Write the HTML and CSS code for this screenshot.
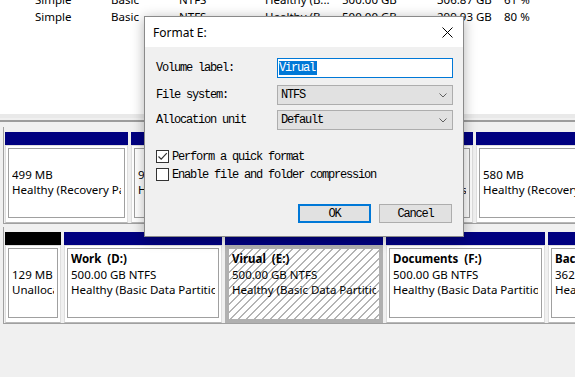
FILE: index.html
```html
<!DOCTYPE html>
<html lang="en">
<head>
    <meta charset="UTF-8" />
    <title>Disk Management - Format E:</title>
    <link rel="stylesheet" href="styles.css">
</head>
<body>
    <div class="volumes">
        <div class="vol-row">
            <span>Simple</span><span>Basic</span><span>NTFS</span><span>Healthy (B...</span><span>500.00 GB</span><span>306.87 GB</span><span>61 %</span>
        </div>
        <div class="vol-row">
            <span>Simple</span><span>Basic</span><span>NTFS</span><span>Healthy (B...</span><span>500.00 GB</span><span>299.93 GB</span><span>80 %</span>
        </div>
    </div>
    <div class="splitter"></div>

    <div class="disks">
        <div class="disk">
            <div class="part" style="width:123px">
                <div class="bar"></div>
                <div class="cell"><div class="box">
                    <div class="ln">&nbsp;</div>
                    <div class="ln">499 MB</div>
                    <div class="ln">Healthy (Recovery Partition)</div>
                </div></div>
            </div>
            <div class="part" style="width:99px">
                <div class="bar"></div>
                <div class="cell"><div class="box">
                    <div class="ln">&nbsp;</div>
                    <div class="ln">99 MB</div>
                    <div class="ln">Healthy (EFI System Partition)</div>
                </div></div>
            </div>
            <div class="part" style="width:240px">
                <div class="bar"></div>
                <div class="cell"><div class="box">
                    <div class="ln name">(C:)</div>
                    <div class="ln">99.25 GB NTFS</div>
                    <div class="ln">Healthy (Boot, Page File, Crash Dump, Basic Data Partition)</div>
                </div></div>
            </div>
            <div class="part grow">
                <div class="bar"></div>
                <div class="cell"><div class="box">
                    <div class="ln">&nbsp;</div>
                    <div class="ln">580 MB</div>
                    <div class="ln">Healthy (Recovery Partition)</div>
                </div></div>
            </div>
        </div>

        <div class="disk">
            <div class="part" style="width:56px">
                <div class="bar unalloc"></div>
                <div class="cell"><div class="box">
                    <div class="ln">&nbsp;</div>
                    <div class="ln">129 MB</div>
                    <div class="ln">Unallocated</div>
                </div></div>
            </div>
            <div class="part" style="width:158px">
                <div class="bar"></div>
                <div class="cell"><div class="box">
                    <div class="ln name">Work&nbsp; (D:)</div>
                    <div class="ln">500.00 GB NTFS</div>
                    <div class="ln">Healthy (Basic Data Partition)</div>
                </div></div>
            </div>
            <div class="part" style="width:158px">
                <div class="bar"></div>
                <div class="cell selected">
                    <div class="ln name">Virual&nbsp; (E:)</div>
                    <div class="ln">500.00 GB NTFS</div>
                    <div class="ln">Healthy (Basic Data Partition)</div>
                </div>
            </div>
            <div class="part" style="width:159px">
                <div class="bar"></div>
                <div class="cell"><div class="box">
                    <div class="ln name">Documents&nbsp; (F:)</div>
                    <div class="ln">500.00 GB NTFS</div>
                    <div class="ln">Healthy (Basic Data Partition)</div>
                </div></div>
            </div>
            <div class="part grow">
                <div class="bar"></div>
                <div class="cell"><div class="box">
                    <div class="ln name">Backup&nbsp; (G:)</div>
                    <div class="ln">362.51 GB NTFS</div>
                    <div class="ln">Healthy (Basic Data Partition)</div>
                </div></div>
            </div>
        </div>
    </div>

    <div class="dialog">
        <div class="titlebar">
            <span class="title">Format E:</span>
            <svg class="close" width="11" height="11" viewBox="0 0 11 11">
                <path d="M0.5 0.5 L10.5 10.5 M10.5 0.5 L0.5 10.5" stroke="#000" stroke-width="1" fill="none"/>
            </svg>
        </div>
        <div class="dlg-body">
            <div class="field">
                <label>Volume label:</label>
                <div class="input"><span class="sel">Virual</span></div>
            </div>
            <div class="field">
                <label>File system:</label>
                <div class="combo"><span>NTFS</span>
                    <svg width="8" height="5" viewBox="0 0 8 5"><path d="M0.5 0.5 L4 4 L7.5 0.5" stroke="#606060" fill="none"/></svg>
                </div>
            </div>
            <div class="field gap-s">
                <label>Allocation unit</label>
                <div class="combo"><span>Default</span>
                    <svg width="8" height="5" viewBox="0 0 8 5"><path d="M0.5 0.5 L4 4 L7.5 0.5" stroke="#606060" fill="none"/></svg>
                </div>
            </div>
            <div class="check first">
                <span class="cb">
                    <svg width="11" height="11" viewBox="0 0 11 11"><path d="M1.5 5.5 L4.2 8.2 L9.8 2.2" stroke="#333" stroke-width="1.2" fill="none"/></svg>
                </span>
                <span>Perform a quick format</span>
            </div>
            <div class="check">
                <span class="cb"></span>
                <span>Enable file and folder compression</span>
            </div>
            <div class="buttons">
                <button class="btn default">OK</button>
                <button class="btn">Cancel</button>
            </div>
        </div>
    </div>
</body>
</html>
```

FILE: styles.css
```css
body {
    margin: 0;
    width: 575px;
    height: 377px;
    overflow: hidden;
    position: relative;
    font-family: 'Noto Sans', 'Open Sans', sans-serif;
    font-size: 11.5px;
    color: #000;
    background: #f0f0f0;
}

/* volume list (scrolled) */
.volumes {
    background: #fff;
    height: 114px;
    overflow: hidden;
}
.vol-row {
    display: grid;
    grid-template-columns: 76px 68px 86px 77px 95px 67px 60px;
    padding-left: 35px;
    height: 17px;
    line-height: 17px;
    white-space: nowrap;
}
.vol-row:first-child {
    margin-top: -9px;
}
.splitter {
    height: 4px;
    background: #e9e9e9;
    border-bottom: 2px solid #f0f0f0;
    box-shadow: 0 2px 0 #9c9c9c;
    margin-bottom: 2px;
}

/* disk map */
.disks {
    padding: 5px 0 0 3px;
}
.disk {
    display: flex;
    gap: 3px;
    height: 91px;
    padding: 5px 0 0 1px;
    border-left: 1px solid #a0a0a0;
    border-bottom: 1px solid #a0a0a0;
    margin-bottom: 3px;
}
.part {
    display: flex;
    flex-direction: column;
    flex-shrink: 0;
}
.part.grow {
    flex: 1 0 120px;
}
.bar {
    height: 13px;
    background: #000080;
}
.bar.unalloc {
    background: #000;
}
.cell {
    flex: 1;
    background: #fff;
    border: 1px solid #dedede;
    border-bottom-color: #b8b8b8;
    padding: 2px 2px 4px;
    overflow: hidden;
}
.box {
    height: 100%;
    box-sizing: border-box;
    border: 1px solid #a0a0a0;
    padding: 2px 3px;
    overflow: hidden;
}
.ln {
    line-height: 15.5px;
    white-space: nowrap;
    overflow: hidden;
}
.name {
    font-weight: bold;
}
.cell.selected {
    border: 4px solid #b0b0b0;
    padding: 2px 3px;
    background: repeating-linear-gradient(135deg, #fff 0, #fff 4.6px, #b4b4b4 4.6px, #b4b4b4 5.66px);
}

/* format dialog */
.dialog {
    position: absolute;
    left: 144px;
    top: 16px;
    width: 318px;
    height: 219px;
    border: 1px solid #8a8a8a;
    background: #f0f0f0;
    box-shadow: 0 2px 12px rgba(0,0,0,0.3);
}
.titlebar {
    height: 30px;
    background: #fff;
    display: flex;
    align-items: center;
    justify-content: space-between;
    padding: 0 10px 0 8px;
    font-size: 12px;
}
.close {
    display: block;
}
.dlg-body {
    padding: 11px 10px 0 11px;
    font-family: 'Liberation Mono', monospace;
    font-size: 12px;
    letter-spacing: -1.2px;
}
.field {
    display: flex;
    align-items: center;
    margin-bottom: 7px;
}
.field.gap-s {
    margin-top: -2px;
}
.field label {
    width: 121px;
}
.input, .combo {
    width: 176px;
    height: 20px;
    box-sizing: border-box;
    display: flex;
    align-items: center;
}
.input {
    background: #fff;
    border: 1px solid #0078d7;
    padding-left: 1px;
}
.sel {
    background: #0078d7;
    color: #fff;
    line-height: 14px;
    padding-right: 2px;
}
.combo {
    background: #e1e1e1;
    border: 1px solid #adadad;
    padding: 0 5px 0 3px;
    justify-content: space-between;
}
.check {
    display: flex;
    align-items: center;
    gap: 3px;
    height: 13px;
    margin-bottom: 5px;
}
.check.first {
    margin-top: 20px;
}
.cb {
    width: 13px;
    height: 13px;
    box-sizing: border-box;
    border: 1px solid #333;
    background: #fff;
    display: flex;
    align-items: center;
    justify-content: center;
}
.buttons {
    display: flex;
    justify-content: flex-end;
    gap: 8px;
    margin-top: 23px;
    padding-right: 1px;
}
.btn {
    width: 73px;
    height: 19px;
    background: #e1e1e1;
    border: 1px solid #adadad;
    font-family: 'Liberation Mono', monospace;
    font-size: 12px;
    letter-spacing: -1.2px;
    color: #000;
    padding: 0;
}
.btn.default {
    border: 2px solid #0078d7;
}
```
